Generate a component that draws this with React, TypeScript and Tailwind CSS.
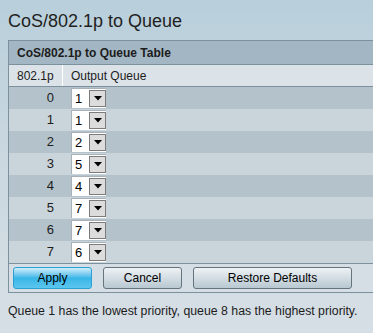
const rows = [
  { p: 0, q: 1 },
  { p: 1, q: 1 },
  { p: 2, q: 2 },
  { p: 3, q: 5 },
  { p: 4, q: 4 },
  { p: 5, q: 7 },
  { p: 6, q: 7 },
  { p: 7, q: 6 },
];

const QueueSelect = ({ value }: { value: number }) => (
  <div className="flex h-[20px] w-[35px] items-center border-t border-l border-[#a9b1b7] bg-white">
    <span className="w-[17px] pl-[3px] text-[13px] leading-none text-black">{value}</span>
    <div className="flex h-[17px] w-[17px] items-center justify-center border border-[#7c7c7c] bg-[#dcdcdc]">
      <svg width="8" height="5" viewBox="0 0 8 5">
        <path d="M0 0h8L4 4.5z" fill="#000" />
      </svg>
    </div>
  </div>
);

const App = () => {
  return (
    <div className="h-[333px] w-[373px] overflow-hidden bg-gradient-to-b from-[#b8cfdb] via-[#cbd8e0] to-[#d6dfe5] font-['Liberation_Sans',Arial,sans-serif] text-[#1c1c1c]">
      <h1 className="pl-2 pt-[11px] text-[18px] leading-[20px] text-[#1f1f1f]">CoS/802.1p to Queue</h1>

      <div className="ml-2 mt-[9px] w-[420px] border border-[#7d919c] bg-[#d5dee4]">
        <div className="flex h-[24px] items-center border-b border-[#7d919c] bg-[#a2b6c3] pl-2 text-[12px] font-bold">
          CoS/802.1p to Queue Table
        </div>
        <div className="flex h-[22px] border-b border-[#7d919c] bg-[#dce3e8] text-[12px]">
          <div className="flex w-[54px] items-center border-r border-white pl-2">802.1p</div>
          <div className="flex items-center pl-[8px]">Output Queue</div>
        </div>
        {rows.map((row, i) => (
          <div
            key={row.p}
            className={`flex h-[22px] items-center text-[13px] ${i % 2 === 0 ? 'bg-[#b3c2cb]' : 'bg-[#cad4db]'}`}
          >
            <div className="w-[54px] pr-[9px] text-right">{row.p}</div>
            <div className="pl-[8px]">
              <QueueSelect value={row.q} />
            </div>
          </div>
        ))}
        <div className="flex gap-[11px] border-t border-[#7d919c] px-[4px] pb-[3px] pt-[3px] text-[12px]">
          <button className="h-[22px] w-[79px] rounded-[3px] border border-[#2a9fd4] bg-gradient-to-b from-[#cdeefb] via-[#36b6e8] to-[#5cc6ee] text-black">
            Apply
          </button>
          <button className="h-[22px] w-[79px] rounded-[3px] border border-[#65737c] bg-gradient-to-b from-[#eef2f5] via-[#d3dde3] to-[#b9c8d1] text-black">
            Cancel
          </button>
          <button className="h-[22px] w-[159px] rounded-[3px] border border-[#65737c] bg-gradient-to-b from-[#eef2f5] via-[#d3dde3] to-[#b9c8d1] text-black">
            Restore Defaults
          </button>
        </div>
      </div>

      <p className="pl-2 pt-[11px] text-[12.3px] leading-[14px]">
        Queue 1 has the lowest priority, queue 8 has the highest priority.
      </p>
    </div>
  );
};

export default App;
